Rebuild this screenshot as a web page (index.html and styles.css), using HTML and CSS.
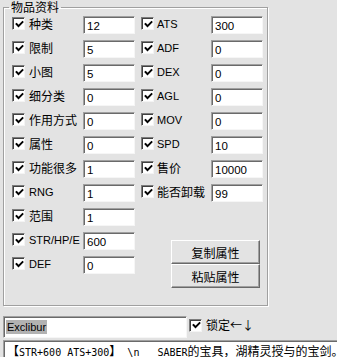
FILE: index.html
```html
<!DOCTYPE html>
<html>
<head>
<meta charset="utf-8">
<link rel="stylesheet" href="styles.css">
</head>
<body>
<fieldset class="group">
  <legend class="title">物品资料</legend>
  <div class="cols">
    <div class="col col-left">
      <div class="row"><span class="cb"><svg viewBox="0 0 9 9"><polyline points="1.5,4 3.5,6.2 7.5,2"/></svg></span><span class="lbl zh">种类</span><span class="edit">12</span></div>
      <div class="row"><span class="cb"><svg viewBox="0 0 9 9"><polyline points="1.5,4 3.5,6.2 7.5,2"/></svg></span><span class="lbl zh">限制</span><span class="edit">5</span></div>
      <div class="row"><span class="cb"><svg viewBox="0 0 9 9"><polyline points="1.5,4 3.5,6.2 7.5,2"/></svg></span><span class="lbl zh">小图</span><span class="edit">5</span></div>
      <div class="row"><span class="cb"><svg viewBox="0 0 9 9"><polyline points="1.5,4 3.5,6.2 7.5,2"/></svg></span><span class="lbl zh">细分类</span><span class="edit">0</span></div>
      <div class="row"><span class="cb"><svg viewBox="0 0 9 9"><polyline points="1.5,4 3.5,6.2 7.5,2"/></svg></span><span class="lbl zh">作用方式</span><span class="edit">0</span></div>
      <div class="row"><span class="cb"><svg viewBox="0 0 9 9"><polyline points="1.5,4 3.5,6.2 7.5,2"/></svg></span><span class="lbl zh">属性</span><span class="edit">0</span></div>
      <div class="row"><span class="cb"><svg viewBox="0 0 9 9"><polyline points="1.5,4 3.5,6.2 7.5,2"/></svg></span><span class="lbl zh">功能很多</span><span class="edit">1</span></div>
      <div class="row"><span class="cb"><svg viewBox="0 0 9 9"><polyline points="1.5,4 3.5,6.2 7.5,2"/></svg></span><span class="lbl">RNG</span><span class="edit">1</span></div>
      <div class="row"><span class="cb"><svg viewBox="0 0 9 9"><polyline points="1.5,4 3.5,6.2 7.5,2"/></svg></span><span class="lbl zh">范围</span><span class="edit">1</span></div>
      <div class="row"><span class="cb"><svg viewBox="0 0 9 9"><polyline points="1.5,4 3.5,6.2 7.5,2"/></svg></span><span class="lbl">STR/HP/E</span><span class="edit">600</span></div>
      <div class="row"><span class="cb"><svg viewBox="0 0 9 9"><polyline points="1.5,4 3.5,6.2 7.5,2"/></svg></span><span class="lbl">DEF</span><span class="edit">0</span></div>
    </div>
    <div class="col col-right">
      <div class="row"><span class="cb"><svg viewBox="0 0 9 9"><polyline points="1.5,4 3.5,6.2 7.5,2"/></svg></span><span class="lbl">ATS</span><span class="edit">300</span></div>
      <div class="row"><span class="cb"><svg viewBox="0 0 9 9"><polyline points="1.5,4 3.5,6.2 7.5,2"/></svg></span><span class="lbl">ADF</span><span class="edit">0</span></div>
      <div class="row"><span class="cb"><svg viewBox="0 0 9 9"><polyline points="1.5,4 3.5,6.2 7.5,2"/></svg></span><span class="lbl">DEX</span><span class="edit">0</span></div>
      <div class="row"><span class="cb"><svg viewBox="0 0 9 9"><polyline points="1.5,4 3.5,6.2 7.5,2"/></svg></span><span class="lbl">AGL</span><span class="edit">0</span></div>
      <div class="row"><span class="cb"><svg viewBox="0 0 9 9"><polyline points="1.5,4 3.5,6.2 7.5,2"/></svg></span><span class="lbl">MOV</span><span class="edit">0</span></div>
      <div class="row"><span class="cb"><svg viewBox="0 0 9 9"><polyline points="1.5,4 3.5,6.2 7.5,2"/></svg></span><span class="lbl">SPD</span><span class="edit">10</span></div>
      <div class="row"><span class="cb"><svg viewBox="0 0 9 9"><polyline points="1.5,4 3.5,6.2 7.5,2"/></svg></span><span class="lbl zh">售价</span><span class="edit">10000</span></div>
      <div class="row"><span class="cb"><svg viewBox="0 0 9 9"><polyline points="1.5,4 3.5,6.2 7.5,2"/></svg></span><span class="lbl zh">能否卸载</span><span class="edit">99</span></div>
      <div class="btns">
        <div class="btn">复制属性</div>
        <div class="btn">粘贴属性</div>
      </div>
    </div>
  </div>
</fieldset>
<div class="name-row">
  <div class="edit name"><span class="sel">Exclibur</span></div>
  <div class="lock"><span class="cb"><svg viewBox="0 0 9 9"><polyline points="1.5,4 3.5,6.2 7.5,2"/></svg></span><span class="lock-text">锁定←↓</span></div>
</div>
<div class="edit desc">【<span class="half">STR+600 ATS+300</span>】<span class="half"> \n </span>　<span class="half">SABER</span>的宝具，湖精灵授与的宝剑。</div>
</body>
</html>
```

FILE: styles.css
```css
html, body {
  margin: 0;
  padding: 0;
  background: #e3e3e3;
  overflow: hidden;
}
body {
  width: 337px;
  height: 357px;
  font-family: "Liberation Sans", "Noto Sans CJK SC", sans-serif;
  font-size: 11px;
  color: #000;
}
.group {
  margin: 0 0 0 3px;
  padding: 0;
  width: 263px;
  border: 1px solid #a0a0a0;
  box-shadow: inset 1px 1px 0 #fff, 1px 1px 0 #fff;
  min-width: 0;
}
.title {
  margin-left: 5px;
  padding: 0 2px;
  line-height: 14px;
  height: 14px;
  font-family: "Noto Sans CJK SC", sans-serif;
  font-size: 12px;
}
.cols {
  display: flex;
  margin-top: -2px;
  padding-bottom: 17px;
}
.col {
  display: flex;
  flex-direction: column;
}
.col-left {
  padding-left: 8px;
}
.col-right {
  padding-left: 6px;
}
.row {
  display: flex;
  align-items: center;
  height: 24px;
}
.cb {
  box-sizing: border-box;
  width: 13px;
  height: 13px;
  background: #fff;
  border-top: 1px solid #7c7c7c;
  border-left: 1px solid #7c7c7c;
  border-right: 1px solid #f4f4f4;
  border-bottom: 1px solid #f4f4f4;
  box-shadow: inset 1px 1px 0 #404040;
  display: flex;
  align-items: center;
  justify-content: center;
  flex: none;
  margin-bottom: 1px;
}
.cb svg {
  width: 9px;
  height: 9px;
  margin: 1px 0 0 1px;
}
.cb polyline {
  fill: none;
  stroke: #000;
  stroke-width: 1.9;
  stroke-linecap: square;
}
.lbl {
  width: 54px;
  margin-left: 4px;
  white-space: nowrap;
  font-size: 11px;
  line-height: 14px;
}
.lbl.zh {
  font-family: "Noto Sans CJK SC", sans-serif;
  font-size: 12px;
}
.col-right .lbl {
  margin-left: 3px;
}
.edit {
  box-sizing: border-box;
  width: 52px;
  height: 18px;
  background: #fff;
  border-top: 1px solid #a0a0a0;
  border-left: 1px solid #a0a0a0;
  border-right: 1px solid #f6f6f6;
  border-bottom: 1px solid #f6f6f6;
  box-shadow: inset 1px 1px 0 #6a6a6a;
  padding: 2px 0 0 3px;
  line-height: 14px;
  font-size: 11.5px;
  white-space: nowrap;
  overflow: hidden;
}
.row .edit {
  margin-top: 1px;
}
.btns {
  display: flex;
  flex-direction: column;
  margin: 36px 0 0 30px;
}
.btn {
  box-sizing: border-box;
  width: 89px;
  height: 24px;
  display: flex;
  align-items: center;
  justify-content: center;
  background: #e3e3e3;
  border-top: 1px solid #fff;
  border-left: 1px solid #fff;
  border-right: 1px solid #696969;
  border-bottom: 1px solid #696969;
  box-shadow: inset -1px -1px 0 #a0a0a0;
  font-family: "Noto Sans CJK SC", sans-serif;
  font-size: 12px;
  padding-top: 1px;
}
.name-row {
  display: flex;
  align-items: flex-start;
  margin: 10px 0 0 3px;
}
.edit.name {
  width: 184px;
  height: 22px;
  padding: 2px 0 0 2px;
  line-height: 17px;
  font-size: 11px;
}
.sel {
  background: #b2b2b2;
  padding: 1px 1px;
}
.lock {
  display: flex;
  align-items: center;
  margin: 2px 0 0 2px;
}
.lock .cb {
  margin-bottom: 0;
}
.lock-text {
  margin-left: 4px;
  font-family: "Noto Sans CJK SC", sans-serif;
  font-size: 12px;
  line-height: 14px;
}
.edit.desc {
  width: 340px;
  height: 22px;
  margin: 2px 0 0 3px;
  padding: 1px 0 0 3px;
  line-height: 18px;
  white-space: pre;
  font-family: "Noto Sans CJK SC", sans-serif;
  font-size: 12px;
}
.half {
  font-family: "DejaVu Sans Mono", monospace;
  font-size: 10px;
  line-height: 18px;
}
```
